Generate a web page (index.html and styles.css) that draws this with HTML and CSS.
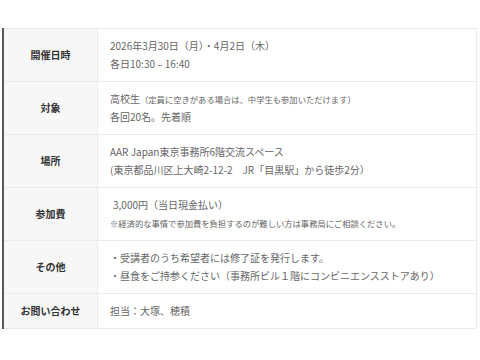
FILE: index.html
```html
<!DOCTYPE html>
<html lang="ja">
<head>
<meta charset="utf-8">
<link rel="stylesheet" href="styles.css">
</head>
<body>
<div class="wrap">
<table class="info">
  <tr>
    <th>開催日時</th>
    <td>2026年3月30日（月）・4月2日（木）<br>各日10:30 – 16:40</td>
  </tr>
  <tr>
    <th>対象</th>
    <td>高校生<span class="small">（定員に空きがある場合は、中学生も参加いただけます）</span><br>各回20名。先着順</td>
  </tr>
  <tr>
    <th>場所</th>
    <td>AAR Japan東京事務所6階交流スペース<br>(東京都品川区上大崎2-12-2　JR「目黒駅」から徒歩2分）</td>
  </tr>
  <tr>
    <th>参加費</th>
    <td><span class="indent">3,000円（当日現金払い）</span><br><span class="small">※経済的な事情で参加費を負担するのが難しい方は事務局にご相談ください。</span></td>
  </tr>
  <tr>
    <th>その他</th>
    <td class="spaced">・受講者のうち希望者には修了証を発行します。<br>・昼食をご持参ください（事務所ビル１階にコンビニエンスストアあり）</td>
  </tr>
  <tr>
    <th>お問い合わせ</th>
    <td>担当：大塚、穂積</td>
  </tr>
</table>
</div>
</body>
</html>
```
FILE: styles.css
```css
html, body {
  margin: 0;
  padding: 0;
  background: #ffffff;
}
.wrap {
  padding: 28px 3px 0 2px;
}
.info {
  width: 100%;
  border-collapse: collapse;
  border-left: 2px solid #5a5a5a;
  font-family: "Noto Sans CJK JP", "Noto Sans", sans-serif;
  font-size: 10px;
  line-height: 18px;
}
.info th,
.info td {
  border-top: 1px solid #ebebeb;
  border-bottom: 1px solid #ebebeb;
  padding: 8px 0;
  vertical-align: middle;
}
.info th {
  width: 93px;
  background: #f7f7f7;
  color: #333333;
  font-weight: bold;
  text-align: center;
  border-right: 1px solid #ebebeb;
}
.info td {
  padding-left: 12px;
  color: #666666;
  text-align: left;
  border-right: 1px solid #ebebeb;
}
.small {
  font-size: 8.3px;
}
.indent {
  padding-left: 3px;
}
.spaced {
  letter-spacing: 0;
}
```
